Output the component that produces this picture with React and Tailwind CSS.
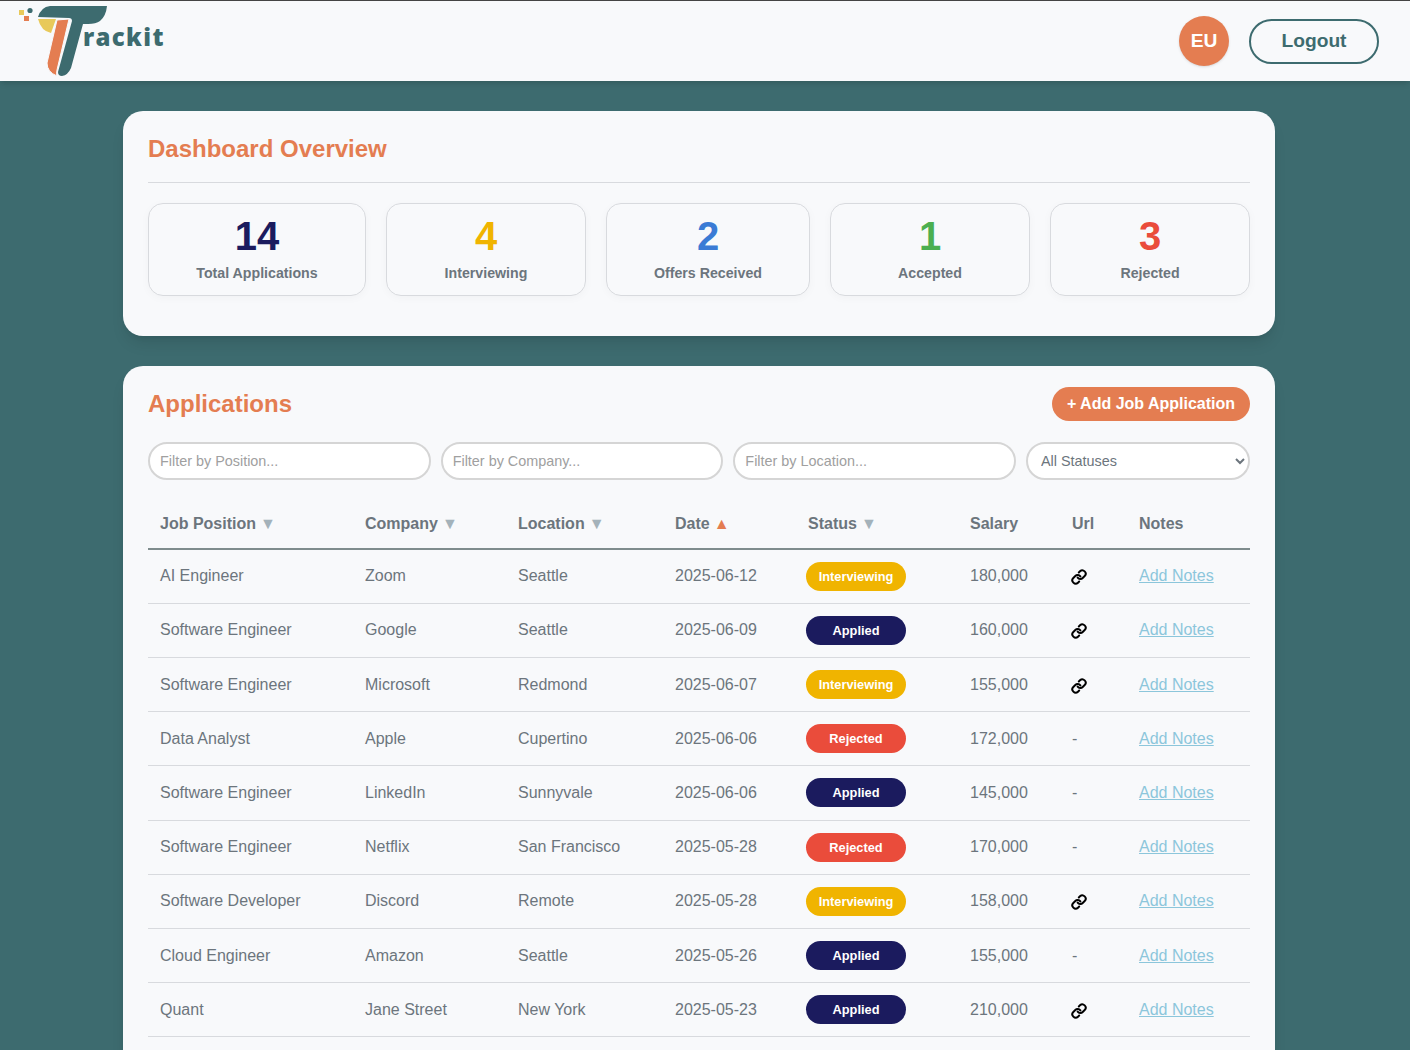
import { Link } from "lucide-react";

const stats = [
  { value: "14", label: "Total Applications", color: "text-[#1b1b5e]", width: "w-[218px]" },
  { value: "4", label: "Interviewing", color: "text-[#f0b400]", width: "w-[200px]" },
  { value: "2", label: "Offers Received", color: "text-[#3a7bd5]", width: "w-[204px]" },
  { value: "1", label: "Accepted", color: "text-[#4caf50]", width: "w-[200px]" },
  { value: "3", label: "Rejected", color: "text-[#ea4c3b]", width: "w-[200px]" },
];

const statusColors = {
  Interviewing: "bg-[#f0b400]",
  Applied: "bg-[#1b1b5e]",
  Rejected: "bg-[#ea4c3b]",
  Offer: "bg-[#3a7bd5]",
};

const rows = [
  ["AI Engineer", "Zoom", "Seattle", "2025-06-12", "Interviewing", "180,000", true],
  ["Software Engineer", "Google", "Seattle", "2025-06-09", "Applied", "160,000", true],
  ["Software Engineer", "Microsoft", "Redmond", "2025-06-07", "Interviewing", "155,000", true],
  ["Data Analyst", "Apple", "Cupertino", "2025-06-06", "Rejected", "172,000", false],
  ["Software Engineer", "LinkedIn", "Sunnyvale", "2025-06-06", "Applied", "145,000", false],
  ["Software Engineer", "Netflix", "San Francisco", "2025-05-28", "Rejected", "170,000", false],
  ["Software Developer", "Discord", "Remote", "2025-05-28", "Interviewing", "158,000", true],
  ["Cloud Engineer", "Amazon", "Seattle", "2025-05-26", "Applied", "155,000", false],
  ["Quant", "Jane Street", "New York", "2025-05-23", "Applied", "210,000", true],
];

const columns = [
  { name: "Job Position", width: "w-[205px]", sort: "down" },
  { name: "Company", width: "w-[153px]", sort: "down" },
  { name: "Location", width: "w-[157px]", sort: "down" },
  { name: "Date", width: "w-[133px]", sort: "up" },
  { name: "Status", width: "w-[162px]", sort: "down" },
  { name: "Salary", width: "w-[102px]" },
  { name: "Url", width: "w-[67px]" },
  { name: "Notes", width: "w-[123px]" },
];

function Logo() {
  return (
    <div className="flex items-start">
      <svg width="95" height="80" viewBox="15 1 95 80" className="shrink-0">
        <rect x="19" y="10" width="5" height="5" fill="#e8c95a" />
        <circle cx="30" cy="10.5" r="2.6" fill="#3d6b6f" />
        <rect x="24" y="16" width="5" height="5" fill="#e47d51" />
        <path d="M38 17 Q41 7 50 6 L107 6 Q106 16 100 21 Q96 24 88 24 L83 24 L71 68 Q68 75 62 76 Q58 76 58 72 L72 21 Q72 18 69 18 Z" fill="#3d6b6f" />
        <path d="M38 19 L56 19 L51 33 Q41 31 38 19 Z" fill="#e8c95a" />
        <path d="M57 20 L69 19 L57 70 Q56 74 57 76 Q47 72 47 63 Z" fill="#e47d51" stroke="#f8f9fb" strokeWidth="1" />
      </svg>
      <span className="-ml-[27px] mt-[20px] font-['Open_Sans',sans-serif] text-[24px] leading-[32px] font-extrabold tracking-[0.055em] text-[#3d6b6f]">
        rackit
      </span>
    </div>
  );
}

function Pill({ status }) {
  return (
    <span className={`-ml-0.5 inline-block h-[29px] w-[100px] rounded-full text-center text-[12.8px] leading-[29px] font-bold text-white ${statusColors[status]}`}>
      {status}
    </span>
  );
}

export default function App() {
  return (
    <div className="min-h-screen bg-[#3d6b6f] font-['Liberation_Sans',Arial,sans-serif]">
      <header className="flex h-[81px] items-start justify-between border-t border-[#444] bg-[#f8f9fb] pr-[31px] pl-[15px] shadow-md">
        <Logo />
        <div className="mt-[15px] flex items-center gap-5">
          <div className="flex h-[50px] w-[50px] items-center justify-center rounded-full bg-[#e47d51] text-[19.2px] font-bold text-white shadow-sm">
            EU
          </div>
          <button className="h-[45px] w-[130px] rounded-full border-2 border-[#3d6b6f] text-[19.2px] font-bold text-[#3d6b6f]">
            Logout
          </button>
        </div>
      </header>

      <main className="ml-[123px] flex w-[1152px] flex-col gap-[30px] pt-[30px] pb-10">
        <section className="rounded-[20px] bg-[#f8f9fb] p-[25px] pb-10 shadow-lg">
          <h2 className="border-b border-[#d8dade] pb-[20px] text-[24px] leading-[26px] font-bold text-[#e47d51]">
            Dashboard Overview
          </h2>
          <div className="mt-5 flex gap-5">
            {stats.map((s) => (
              <div key={s.label} className={`h-[93px] rounded-[15px] border border-[#d8dade] pt-[9px] text-center shadow-[0_2px_10px_rgba(0,0,0,0.03)] ${s.width}`}>
                <div className={`text-[40px] leading-[46px] font-bold ${s.color}`}>{s.value}</div>
                <div className="mt-[6px] text-[14.2px] leading-[17px] font-bold text-[#6c757d]">{s.label}</div>
              </div>
            ))}
          </div>
        </section>

        <section className="rounded-[20px] bg-[#f8f9fb] px-[25px] pt-[21px] pb-6 shadow-lg">
          <div className="flex items-center justify-between">
            <h2 className="text-[24px] leading-[28px] font-bold text-[#e47d51]">Applications</h2>
            <button className="h-[34px] w-[198px] rounded-full bg-[#e47d51] text-[16px] font-bold text-white">
              + Add Job Application
            </button>
          </div>

          <div className="mt-[21px] flex gap-2.5">
            {["Position", "Company", "Location"].map((f) => (
              <input
                key={f}
                placeholder={`Filter by ${f}...`}
                className="h-[38px] min-w-0 flex-1 rounded-full border-2 border-[#d5d5d5] bg-white px-2.5 text-[14.4px] text-[#495057] outline-none placeholder:text-[#a0a0a0]"
              />
            ))}
            <select className="h-[38px] w-[224px] rounded-full border-2 border-[#d5d5d5] bg-white pr-2 pl-[9px] text-[14.4px] text-[#6c757d] outline-none">
              <option>All Statuses</option>
            </select>
          </div>

          <table className="mt-5 w-full table-fixed border-collapse text-left text-[16px] text-[#6c757d]">
            <thead>
              <tr className="h-[49.1px] border-b-2 border-[#7f8c8d]">
                {columns.map((c) => (
                  <th key={c.name} className={`px-3 font-bold ${c.width}`}>
                    {c.name}
                    {c.sort === "down" && <span className="ml-1 text-[16px] text-[#a4b2ba]">▼</span>}
                    {c.sort === "up" && <span className="ml-1 text-[16px] text-[#e47d51]">▲</span>}
                  </th>
                ))}
              </tr>
            </thead>
            <tbody>
              {rows.map((r, i) => (
                <tr key={i} className="h-[54.2px] border-b border-[#d8dade]">
                  <td className="px-3">{r[0]}</td>
                  <td className="px-3">{r[1]}</td>
                  <td className="px-3">{r[2]}</td>
                  <td className="px-3">{r[3]}</td>
                  <td className="px-3"><Pill status={r[4]} /></td>
                  <td className="px-3">{r[5]}</td>
                  <td className="px-3">
                    {r[6] ? <Link size={16} strokeWidth={3} className="-ml-px translate-y-px text-black" /> : "-"}
                  </td>
                  <td className="px-3">
                    <a href="#" className="text-[#8cc6db] underline">Add Notes</a>
                  </td>
                </tr>
              ))}
              <tr className="h-[54.2px]">
                <td className="px-3" colSpan={4}></td>
                <td className="px-3"><Pill status="Offer" /></td>
                <td className="px-3" colSpan={3}></td>
              </tr>
            </tbody>
          </table>
        </section>
      </main>
    </div>
  );
}
